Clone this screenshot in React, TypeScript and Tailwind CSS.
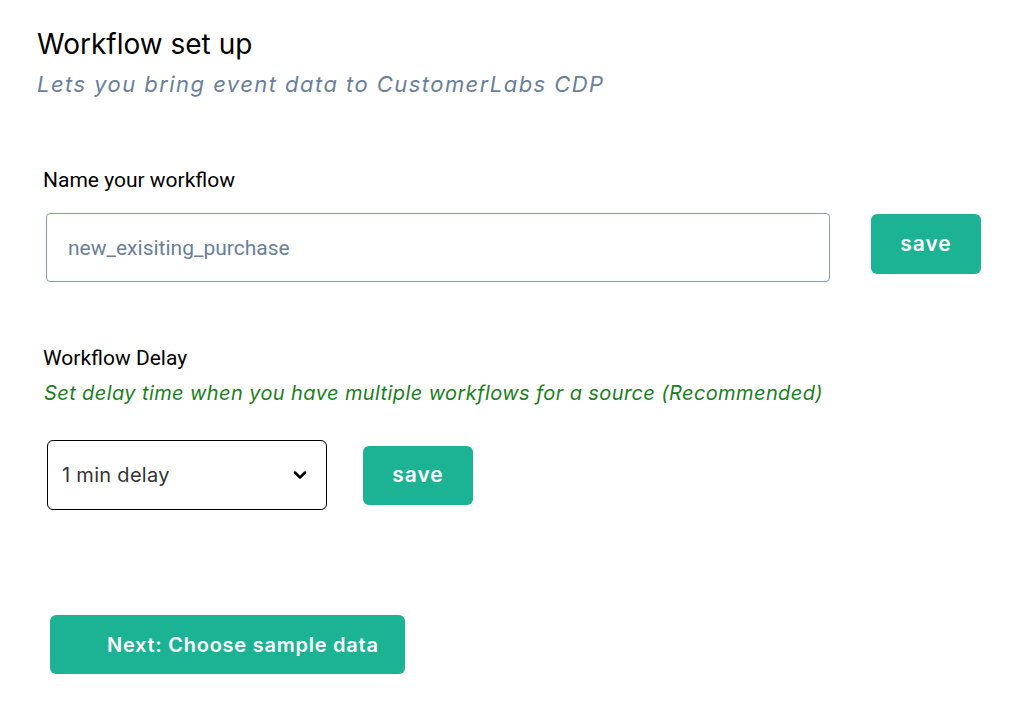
import { ChevronDown } from 'lucide-react'

const poppins = { fontFamily: 'Inter, "Open Sans", sans-serif' }

export default function App() {
  return (
    <div className="min-h-[709px] w-[1024px] bg-white pl-[37px] pt-[24px]" style={poppins}>
      <h1 className="text-[28px] leading-[40px] text-black">Workflow set up</h1>
      <p className="mt-[4px] text-[22px] leading-[32px] italic tracking-[1.45px] text-[#6a7f9b]">
        Lets you bring event data to CustomerLabs CDP
      </p>

      <div className="mt-[68px] pl-[6px]">
        <label className="block text-[21px] leading-[24px] text-black font-['Roboto',sans-serif]">
          Name your workflow
        </label>
        <div className="mt-[21px] flex items-start">
          <input
            defaultValue="new_exisiting_purchase"
            className="ml-[3px] h-[69px] w-[784px] rounded-[4px] border-[1.5px] border-[#8a9ab0] px-[21px] text-[21px] text-[#6a7f9b] font-['Roboto',sans-serif] outline-none"
          />
          <button className="ml-[41px] mt-[1px] h-[60px] w-[110px] rounded-[6px] bg-[#1cb394] text-[21px] font-semibold tracking-[1px] text-white">
            save
          </button>
        </div>
      </div>

      <div className="mt-[64px] pl-[6px]">
        <label className="block text-[21px] leading-[24px] text-black font-['Roboto',sans-serif]">
          Workflow Delay
        </label>
        <p className="mt-[10px] pl-[1px] text-[20px] leading-[26px] italic tracking-[0.4px] text-[#1b7f1b]">
          Set delay time when you have multiple workflows for a source (Recommended)
        </p>
        <div className="mt-[34px] flex items-center">
          <div className="ml-[4px] flex h-[70px] w-[280px] items-center justify-between rounded-[6px] border-[1.5px] border-black pl-[14px] pr-[16px]">
            <span className="text-[20px] tracking-[0.3px] text-[#333]">1 min delay</span>
            <ChevronDown className="h-[20px] w-[20px] text-black" strokeWidth={3} />
          </div>
          <button className="ml-[36px] h-[59px] w-[110px] rounded-[6px] bg-[#1cb394] text-[21px] font-semibold tracking-[1px] text-white">
            save
          </button>
        </div>
      </div>

      <button className="ml-[13px] mt-[105px] flex h-[59px] w-[355px] items-center rounded-[6px] bg-[#1cb394] pl-[57px] text-[20px] font-semibold tracking-[0.75px] text-white">
        Next: Choose sample data
      </button>
    </div>
  )
}
